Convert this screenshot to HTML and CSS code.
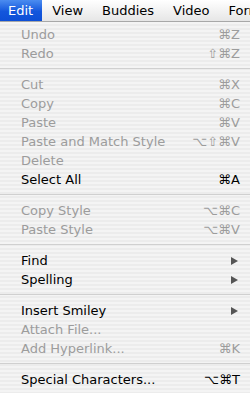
FILE: index.html
```html
<!DOCTYPE html>
<html lang="en">
<head>
    <meta charset="UTF-8">
    <meta name="viewport" content="width=device-width, initial-scale=1.0">
    <title>Edit Menu</title>
    <link rel="stylesheet" href="styles.css">
</head>
<body>
    <!-- menu bar -->
    <div class="menuBar">
        <span class="barItem active">Edit</span>
        <span class="barItem">View</span>
        <span class="barItem">Buddies</span>
        <span class="barItem">Video</span>
        <span class="barItem">Format</span>
    </div>

    <!-- edit menu -->
    <div class="menu">
        <div class="item off"><span class="label">Undo</span><span class="key">⌘Z</span></div>
        <div class="item off"><span class="label">Redo</span><span class="key">⇧⌘Z</span></div>
        <div class="sep"></div>
        <div class="item off"><span class="label">Cut</span><span class="key">⌘X</span></div>
        <div class="item off"><span class="label">Copy</span><span class="key">⌘C</span></div>
        <div class="item off"><span class="label">Paste</span><span class="key">⌘V</span></div>
        <div class="item off"><span class="label">Paste and Match Style</span><span class="key">⌥⇧⌘V</span></div>
        <div class="item off"><span class="label">Delete</span></div>
        <div class="item"><span class="label">Select All</span><span class="key">⌘A</span></div>
        <div class="sep"></div>
        <div class="item off"><span class="label">Copy Style</span><span class="key">⌥⌘C</span></div>
        <div class="item off"><span class="label">Paste Style</span><span class="key">⌥⌘V</span></div>
        <div class="sep"></div>
        <div class="item"><span class="label">Find</span><span class="arrow"></span></div>
        <div class="item"><span class="label">Spelling</span><span class="arrow"></span></div>
        <div class="sep"></div>
        <div class="item"><span class="label">Insert Smiley</span><span class="arrow"></span></div>
        <div class="item off"><span class="label">Attach File...</span></div>
        <div class="item off"><span class="label">Add Hyperlink...</span><span class="key">⌘K</span></div>
        <div class="sep"></div>
        <div class="item"><span class="label">Special Characters...</span><span class="key">⌥⌘T</span></div>
    </div>
</body>
</html>
```

FILE: styles.css
```css
body {
    margin: 0;
    width: 250px;
    height: 393px;
    overflow: hidden;
    font-family: "DejaVu Sans", "Liberation Sans", sans-serif;
    background-color: #f2f2f2;
}

.menuBar {
    display: flex;
    height: 21px;
    border-bottom: 1px solid #a8a8a8;
    background: linear-gradient(#ffffff, #e6e6e6);
    white-space: nowrap;
    overflow: hidden;
}

.barItem {
    padding: 0 9px 0 10px;
    font-size: 13px;
    line-height: 21px;
    color: #000;
}

.barItem.active {
    padding: 0 9px 0 8px;
    color: #fff;
    background: linear-gradient(#4b8cf0, #1356dc 55%, #0d4fd6);
}

.menu {
    padding: 3px 0 4px;
    background: repeating-linear-gradient(#f4f4f4 0, #f4f4f4 2px, #ececec 2px, #ececec 4px);
}

.item {
    display: flex;
    align-items: center;
    height: 19px;
    padding: 0 10px 0 21px;
    font-size: 13px;
    color: #000;
}

.item .label {
    flex: 1;
}

.item.off {
    color: #9c9c9c;
}

.key {
    font-size: 13px;
}

.arrow {
    width: 0;
    height: 0;
    margin-right: 2px;
    border-top: 4px solid transparent;
    border-bottom: 4px solid transparent;
    border-left: 7px solid #555;
}

.sep {
    height: 12px;
    background: linear-gradient(transparent 5px, #d0d0d0 5px, #d0d0d0 6px, transparent 6px);
}
```
